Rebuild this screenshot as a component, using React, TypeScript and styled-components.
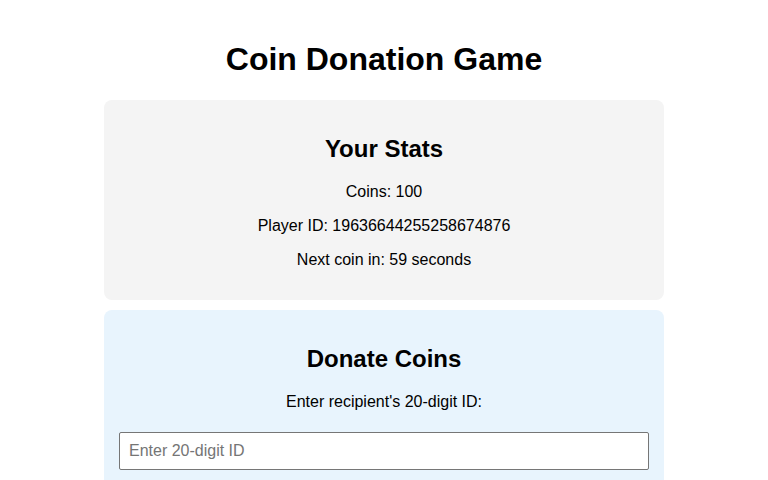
import React, { useState } from 'react';
import styled, { createGlobalStyle } from 'styled-components';

const GlobalStyle = createGlobalStyle`
  body {
    margin: 0;
    font-family: "Liberation Sans", Arial, sans-serif;
    color: #000;
    background: #fff;
  }
`;

const Container = styled.div`
  max-width: 560px;
  margin: 0 auto;
  padding: 20px;
  text-align: center;
`;

const Title = styled.h1`
  font-size: 32px;
  margin: 21.44px 0;
`;

const Card = styled.section<{ $tint?: boolean }>`
  background-color: ${({ $tint }) => ($tint ? '#e8f4fd' : '#f4f4f4')};
  border-radius: 8px;
  padding: 15px;
  margin-bottom: 10px;
`;

const CardTitle = styled.h2`
  font-size: 24px;
  margin: 19.92px 0;
`;

const Line = styled.p`
  font-size: 16px;
  margin: 16px 0;
`;

const IdInput = styled.input`
  display: block;
  box-sizing: border-box;
  width: 100%;
  height: 38px;
  margin: 21px 0 5px;
  padding: 0 9px;
  font-family: "Liberation Sans", Arial, sans-serif;
  font-size: 16px;
  border: 1px solid #767676;
  border-radius: 2px;
  background: #fff;

  &::placeholder {
    color: #757575;
  }
`;

export default function App() {
  const [recipient, setRecipient] = useState('');

  return (
    <>
      <GlobalStyle />
      <Container>
        <Title>Coin Donation Game</Title>
        <Card>
          <CardTitle>Your Stats</CardTitle>
          <Line>Coins: 100</Line>
          <Line>Player ID: 19636644255258674876</Line>
          <Line>Next coin in: 59 seconds</Line>
        </Card>
        <Card $tint>
          <CardTitle>Donate Coins</CardTitle>
          <Line>Enter recipient's 20-digit ID:</Line>
          <IdInput
            placeholder="Enter 20-digit ID"
            value={recipient}
            onChange={(e) => setRecipient(e.target.value)}
          />
        </Card>
      </Container>
    </>
  );
}
